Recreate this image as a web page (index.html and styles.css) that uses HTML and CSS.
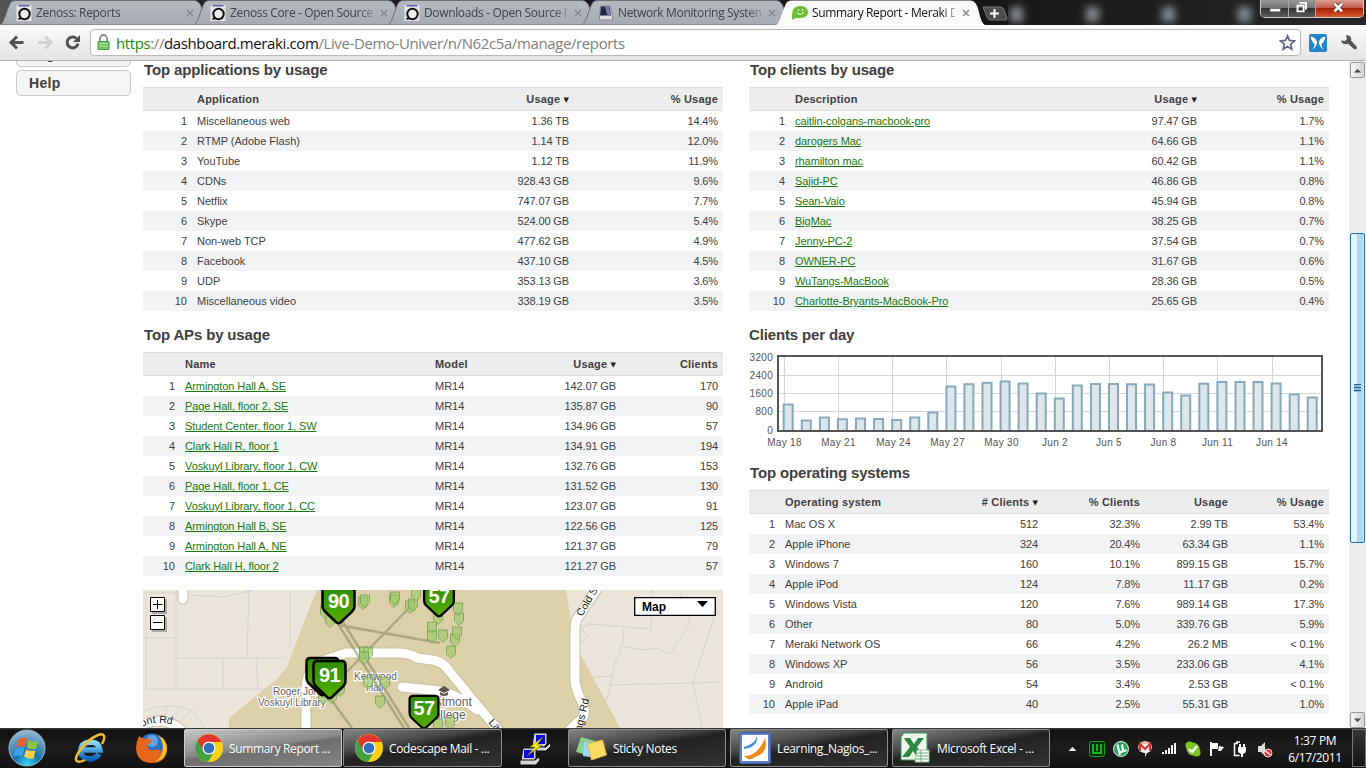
FILE: index.html
```html
<!DOCTYPE html>
<html lang="en">
<head>
<meta charset="utf-8">
<title>Summary Report - Meraki Dashboard</title>
<link rel="stylesheet" href="styles.css">
</head>
<body>
<svg class="defs" width="0" height="0" aria-hidden="true">
  <defs>
    <linearGradient id="tabFill" x1="0" y1="0" x2="0" y2="1"><stop offset="0" stop-color="#b5bac1"/><stop offset="1" stop-color="#a5aab3"/></linearGradient>
    <linearGradient id="pinFill" x1="0" y1="0" x2="0" y2="1"><stop offset="0" stop-color="#2f8c00"/><stop offset="1" stop-color="#55b000"/></linearGradient>
    <radialGradient id="orb" cx=".5" cy=".95" r=".9"><stop offset="0" stop-color="#35d5fa"/><stop offset=".4" stop-color="#1673ad"/><stop offset="1" stop-color="#8fb3cc"/></radialGradient>
    <linearGradient id="ieFill" x1="0" y1="0" x2="0" y2="1"><stop offset="0" stop-color="#8bdcfb"/><stop offset="1" stop-color="#0a62bd"/></linearGradient>
    <symbol id="zenoss" viewBox="0 0 15 16"><path fill="#e4e4e4" d="M0 0h15v16H0z"/><path fill="#5a62b8" d="M2 0h11v1.500H2z"/><circle cx="8" cy="9" r="5.200" fill="#eee" stroke="#111" stroke-width="2"/><path d="M2 14l3-1" stroke="#111" stroke-width="2"/></symbol>
    <symbol id="chrome" viewBox="0 0 28 28"><circle cx="14" cy="14" r="14" fill="#fdd017"/><path fill="#43a047" d="M14 14L1.900 7A14 14 0 0 0 13 28l6.500-11z"/><path fill="#e2352b" d="M2.500 6.200A14 14 0 0 1 26.500 8H14l-6 8z"/><circle cx="14" cy="14" r="6.600" fill="#f4f4f4"/><circle cx="14" cy="14" r="5.300" fill="#2c70be"/></symbol>
    <symbol id="close" viewBox="0 0 8 8"><path d="M1 1l6 6M7 1L1 7" stroke="#85898f" stroke-width="1.500"/></symbol>
    <symbol id="tabShape" viewBox="0 0 210 25"><path d="M0 25C5 23 8 3 12 1.500Q13 .5 16 .5H194Q198 .5 200 4C204 11 204 23 209 25z"/></symbol>
  </defs>
</svg>

<header class="tabstrip">
  <div class="tab"><svg class="tab-bg"><use href="#tabShape"/></svg><svg class="fav"><use href="#zenoss"/></svg><span class="tab-title">Zenoss: Reports</span><svg class="tab-x"><use href="#close"/></svg></div>
  <div class="tab"><svg class="tab-bg"><use href="#tabShape"/></svg><svg class="fav"><use href="#zenoss"/></svg><span class="tab-title">Zenoss Core - Open Source</span><svg class="tab-x"><use href="#close"/></svg></div>
  <div class="tab"><svg class="tab-bg"><use href="#tabShape"/></svg><svg class="fav"><use href="#zenoss"/></svg><span class="tab-title">Downloads - Open Source I</span><svg class="tab-x"><use href="#close"/></svg></div>
  <div class="tab"><svg class="tab-bg"><use href="#tabShape"/></svg><svg class="fav" viewBox="0 0 16 16"><path fill="#ddd" stroke="#888" d="M2.500 1h9.500l2.500 10v4h-13v-4z"/><path fill="#202448" d="M3 1.500h8.500l1.500 9H2z"/><path fill="#777dac" d="M7 1.500h4l1.500 9H9.500z"/></svg><span class="tab-title">Network Monitoring System</span><svg class="tab-x"><use href="#close"/></svg></div>
  <div class="tab active"><svg class="tab-bg"><use href="#tabShape"/></svg><svg class="fav" viewBox="0 0 16 16"><path fill="#6cbd34" d="M0 15C0 9-.5 1 8.500 1 13 1 16 3.500 16 7.300S12.500 13 8 13c-3 0-5 0-8 2z"/><path d="M5 8q4 3 7-1" stroke="#fff" fill="none"/><path fill="#fff" d="M6 4h1v2H6zM10 4h1v2h-1z"/></svg><span class="tab-title">Summary Report - Meraki D</span><svg class="tab-x"><use href="#close"/></svg></div>
  <svg class="newtab" viewBox="0 0 26 15"><path fill="#4c4c4c" stroke="#777" d="M1 1h18q2 0 3 3l3 8q.500 2-1 2H8q-2 0-3-3z"/><path stroke="#fff" stroke-width="2" d="M8 7.500h9M12.500 3v9"/></svg>
  <div class="glass"><i></i><i></i><i></i><i></i></div>
  <div class="winbtns">
    <span class="wb min"><svg viewBox="0 0 28 18"><path fill="#fff" stroke="#555" stroke-width=".6" d="M9.500 9h11v3.500h-11z"/></svg></span>
    <span class="wb max"><svg viewBox="0 0 27 18"><path fill="none" stroke="#fff" stroke-width="2" d="M11 3h7v7M9 6h6.500v6H9z"/></svg></span>
    <span class="wb cls"><svg viewBox="0 0 47 18"><path stroke="#533" stroke-width="4.500" d="M19.500 4l8 8M27.500 4l-8 8"/><path stroke="#fff" stroke-width="2.800" d="M19.500 4l8 8M27.500 4l-8 8"/></svg></span>
  </div>
</header>

<nav class="toolbar">
  <svg class="nav-ic" viewBox="0 0 90 35"><g fill="none" stroke-width="3"><path stroke="#505050" d="M23.500 17.500H11M17 11.500l-6 6 6 6"/><path stroke="#d2d2d2" d="M38 17.500h12M45 11.500l6 6-6 6"/><path stroke="#505050" d="M76.500 13.500A5.500 5.500 0 1 0 78 18.500"/></g><path fill="#505050" d="M80 10v7h-7z"/></svg>
  <div class="omnibox">
    <svg class="lock" viewBox="0 0 13 17"><path d="M3 8V4.500a3.500 3.500 0 0 1 7 0V8" fill="none" stroke="#8a8a8a" stroke-width="1.800"/><path fill="#74c567" stroke="#4b9b43" d="M1 7.500h11v8H1z"/><path stroke="#a7dfa0" d="M2 9.500h9M2 12h9"/></svg>
    <span class="url"><b class="ok">https</b>://<b>dashboard.meraki.com</b>/Live-Demo-Univer/n/N62c5a/manage/reports</span>
    <svg class="star" viewBox="0 0 17 17"><path fill="#fff" stroke="#5f6880" stroke-width="1.700" d="M8.500 1.800l2 4.600 5 .5-3.800 3.300 1.100 5-4.300-2.700-4.300 2.700 1.100-5L1.500 6.900l5-.5z"/></svg>
  </div>
  <svg class="ext" viewBox="0 0 18 18"><rect width="18" height="18" rx="2" fill="#2284ca"/><path fill="#fff" d="M1.500 2.500c4 .5 6 2.500 6.700 6-.2 2.500-1.700 4.500-4.700 7.500 1.500-2.500 2-4.500 2-6-2-1.500-3.200-4-4-7.500zM16.500 2.500c-4 .5-6 2.500-6.700 6 .2 2.500 1.700 4.500 4.700 7.500-1.500-2.500-2-4.500-2-6 2-1.500 3.200-4 4-7.500z"/></svg>
  <svg class="wrench" viewBox="0 0 18 18"><path fill="#555" d="M1 6.500L5 7l2-2-1-3.500c3-.8 6 1.500 5 5l5.500 6c1.500 2-.8 4-2.500 2.600L8 9.800C5 11 1.500 9.500 1 6.500z"/></svg>
</nav>

<main class="viewport">
  <aside class="side"><a class="side-btn">Organization</a><a class="side-btn">Help</a></aside>

  <section class="col">
    <h2>Top applications by usage</h2>
    <table>
      <colgroup><col style="width:49px"><col style="width:233px"><col style="width:149px"><col style="width:149px"></colgroup>
      <thead><tr><th></th><th>Application</th><th class="r">Usage <i class="sort">▼</i></th><th class="r">% Usage</th></tr></thead>
      <tbody>
      <tr><td>1</td><td>Miscellaneous web</td><td class="r">1.36 TB</td><td class="r">14.4%</td></tr>
      <tr><td>2</td><td>RTMP (Adobe Flash)</td><td class="r">1.14 TB</td><td class="r">12.0%</td></tr>
      <tr><td>3</td><td>YouTube</td><td class="r">1.12 TB</td><td class="r">11.9%</td></tr>
      <tr><td>4</td><td>CDNs</td><td class="r">928.43 GB</td><td class="r">9.6%</td></tr>
      <tr><td>5</td><td>Netflix</td><td class="r">747.07 GB</td><td class="r">7.7%</td></tr>
      <tr><td>6</td><td>Skype</td><td class="r">524.00 GB</td><td class="r">5.4%</td></tr>
      <tr><td>7</td><td>Non-web TCP</td><td class="r">477.62 GB</td><td class="r">4.9%</td></tr>
      <tr><td>8</td><td>Facebook</td><td class="r">437.10 GB</td><td class="r">4.5%</td></tr>
      <tr><td>9</td><td>UDP</td><td class="r">353.13 GB</td><td class="r">3.6%</td></tr>
      <tr><td>10</td><td>Miscellaneous video</td><td class="r">338.19 GB</td><td class="r">3.5%</td></tr>
      </tbody>
    </table>
    <h2>Top APs by usage</h2>
    <table>
      <colgroup><col style="width:37px"><col style="width:250px"><col style="width:80px"><col style="width:111px"><col style="width:102px"></colgroup>
      <thead><tr><th></th><th>Name</th><th>Model</th><th class="r">Usage <i class="sort">▼</i></th><th class="r">Clients</th></tr></thead>
      <tbody>
      <tr><td>1</td><td><a>Armington Hall A, SE</a></td><td>MR14</td><td class="r">142.07 GB</td><td class="r">170</td></tr>
      <tr><td>2</td><td><a>Page Hall, floor 2, SE</a></td><td>MR14</td><td class="r">135.87 GB</td><td class="r">90</td></tr>
      <tr><td>3</td><td><a>Student Center, floor 1, SW</a></td><td>MR14</td><td class="r">134.96 GB</td><td class="r">57</td></tr>
      <tr><td>4</td><td><a>Clark Hall R, floor 1</a></td><td>MR14</td><td class="r">134.91 GB</td><td class="r">194</td></tr>
      <tr><td>5</td><td><a>Voskuyl Library, floor 1, CW</a></td><td>MR14</td><td class="r">132.76 GB</td><td class="r">153</td></tr>
      <tr><td>6</td><td><a>Page Hall, floor 1, CE</a></td><td>MR14</td><td class="r">131.52 GB</td><td class="r">130</td></tr>
      <tr><td>7</td><td><a>Voskuyl Library, floor 1, CC</a></td><td>MR14</td><td class="r">123.07 GB</td><td class="r">91</td></tr>
      <tr><td>8</td><td><a>Armington Hall B, SE</a></td><td>MR14</td><td class="r">122.56 GB</td><td class="r">125</td></tr>
      <tr><td>9</td><td><a>Armington Hall A, NE</a></td><td>MR14</td><td class="r">121.37 GB</td><td class="r">79</td></tr>
      <tr><td>10</td><td><a>Clark Hall H, floor 2</a></td><td>MR14</td><td class="r">121.27 GB</td><td class="r">57</td></tr>
      </tbody>
    </table>
    <svg class="map" viewBox="143 590 580 138">
      <defs>
        <path id="ap" d="M-4.500-6h9V2L0 6.500-4.500 2z"/>
        <path id="pin" d="M-12-38h24q4 0 4 4v16q0 3-2 5L2-1.500Q0 0-2-1.500L-14-13q-2-2-2-5v-16q0-4 4-4z"/>
        <path id="cold" d="M582 617L606 577"/>
        <path id="mont" d="M142 727Q160 717 190 731"/>
      </defs>
      <path fill="#ece5dc" d="M143 590h580v138H143z"/>
      <g fill="none" stroke="#d6d2cf"><path d="M146 590v98M143 593h33M143 638h33M176 590v98M146 689h118l15-2M177 658h107M223 658v31M256 658l2 31M249 590l-2 67M290 590v58M187 595l37 2 30-7M143 711q25-10 50 0l12 17M168 706l-5 12M180 708l-10 12M191 710l-13 14"/>
      <path d="M582 627l8-3 61 5 2-39M590 624l-9 3 6 9-8 10M651 590l-1 3M624 627l-1 15-8 22-6 28-7 20M620 646l25 4 10-2 15 6 20-31-10-30M723 610l-9 7-21 66 30-1M693 683l-85 2M593 677l20-1M693 683l9 45"/></g>
      <path fill="#dcd0a9" d="M317 590l-11 27-19 50-10 12-48 39v10h391l-40-75-7-20-7-43z"/>
      <g fill="none" stroke-linejoin="round" stroke-linecap="round">
        <g stroke="#cbbf9d" stroke-width="11"><path d="M306 735v-45Q306 670 322 661L346 653H398Q410 653 417 658L432 660Q443 661 450 672L477 705 500 732M402 687L432 690Q455 692 477 710"/><path d="M603 580L579 616Q575 620 575 630V682Q576 690 582 702 588 716 578 722L568 732M183 585v14M138 726Q168 713 186 735"/></g>
        <g stroke="#fff" stroke-width="9"><path d="M306 735v-45Q306 670 322 661L346 653H398Q410 653 417 658L432 660Q443 661 450 672L477 705 500 732M402 687L432 690Q455 692 477 710"/><path d="M603 580L579 616Q575 620 575 630V682Q576 690 582 702 588 716 578 722L568 732M183 585v14M138 726Q168 713 186 735"/></g>
      </g>
      <g class="place">
        <text x="354" y="680">Kerrwood</text><text x="366" y="691">Hall</text>
        <text x="273" y="695">Roger Jones</text><text x="258" y="706">Voskuyl Library</text>
        <g class="big"><text x="418" y="706">Westmont</text><text x="425" y="719">College</text></g>
      </g>
      <g class="road"><text><textPath href="#cold">Cold S</textPath></text><text transform="translate(581 734) rotate(-77)">ings Rd</text><text><textPath href="#mont">ont Rd</textPath></text><text transform="translate(488 723) rotate(45)">La</text></g>
      <path fill="#58534d" d="M438 690l6-4 6 4-6 3zM440 692v3q4 2 8 0v-3l-4 2zM449 690v4"/>
      <g stroke="#7e8058" stroke-opacity=".5" stroke-width="2.500"><path d="M338 624l66 104M343 622l66 106M338 625l102 18M413 604l-82 84M330 698l22 30"/></g>
      <g fill="#9ccb68" fill-opacity=".65" stroke="#71965a" stroke-opacity=".7">
        <use href="#ap" x="330" y="621"/><use href="#ap" x="325" y="612"/><use href="#ap" x="363" y="603"/><use href="#ap" x="365" y="601"/><use href="#ap" x="394" y="601"/><use href="#ap" x="395" y="598"/><use href="#ap" x="410" y="607"/><use href="#ap" x="413" y="605"/><use href="#ap" x="416" y="595"/><use href="#ap" x="432" y="628"/><use href="#ap" x="432" y="637"/><use href="#ap" x="438" y="618"/><use href="#ap" x="443" y="636"/><use href="#ap" x="455" y="640"/><use href="#ap" x="457" y="633"/><use href="#ap" x="451" y="652"/><use href="#ap" x="459" y="619"/><use href="#ap" x="458" y="609"/><use href="#ap" x="364" y="653"/><use href="#ap" x="368" y="653"/><use href="#ap" x="364" y="658"/><use href="#ap" x="368" y="683"/><use href="#ap" x="385" y="683"/><use href="#ap" x="380" y="702"/><use href="#ap" x="340" y="690"/><use href="#ap" x="332" y="697"/><use href="#ap" x="323" y="698"/><use href="#ap" x="438" y="725"/><use href="#ap" x="450" y="723"/>
      </g>
      <g fill="url(#pinFill)" stroke="#000" stroke-width="2.500">
        <use href="#pin" transform="translate(338.500 624)"/><use href="#pin" transform="translate(439 617) scale(.93 .9)"/>
        <use href="#pin" transform="translate(322.500 696)"/><use href="#pin" transform="translate(329.500 699)"/><use href="#pin" transform="translate(424 729) scale(.9 .87)"/>
      </g>
      <g class="pin-n"><text x="338.500" y="608">90</text><text x="439" y="603">57</text><text x="329.500" y="682">91</text><text x="424" y="715">57</text></g>
      <g stroke="#000" fill="#fff"><path fill="#aaa" stroke="none" d="M152 599h15v15h-15zM152 617h15v15h-15z"/><path d="M150.500 597.500h14v14h-14zM150.500 615.500h14v14h-14zM153 604.500h9.500M157.500 600v9M153 622.500h9.500"/></g>
      <path fill="#fff" stroke="#000" stroke-width="1.300" d="M634.700 597.700h80.600v17.600h-80.600z"/><path d="M697 601h11l-5.500 6z"/><text class="map-type" x="642" y="611">Map</text>
    </svg>
  </section>

  <section class="col">
    <h2>Top clients by usage</h2>
    <table>
      <colgroup><col style="width:41px"><col style="width:285px"><col style="width:127px"><col style="width:127px"></colgroup>
      <thead><tr><th></th><th>Description</th><th class="r">Usage <i class="sort">▼</i></th><th class="r">% Usage</th></tr></thead>
      <tbody>
      <tr><td>1</td><td><a>caitlin-colgans-macbook-pro</a></td><td class="r">97.47 GB</td><td class="r">1.7%</td></tr>
      <tr><td>2</td><td><a>darogers Mac</a></td><td class="r">64.66 GB</td><td class="r">1.1%</td></tr>
      <tr><td>3</td><td><a>rhamilton mac</a></td><td class="r">60.42 GB</td><td class="r">1.1%</td></tr>
      <tr><td>4</td><td><a>Sajid-PC</a></td><td class="r">46.86 GB</td><td class="r">0.8%</td></tr>
      <tr><td>5</td><td><a>Sean-Vaio</a></td><td class="r">45.94 GB</td><td class="r">0.8%</td></tr>
      <tr><td>6</td><td><a>BigMac</a></td><td class="r">38.25 GB</td><td class="r">0.7%</td></tr>
      <tr><td>7</td><td><a>Jenny-PC-2</a></td><td class="r">37.54 GB</td><td class="r">0.7%</td></tr>
      <tr><td>8</td><td><a>OWNER-PC</a></td><td class="r">31.67 GB</td><td class="r">0.6%</td></tr>
      <tr><td>9</td><td><a>WuTangs-MacBook</a></td><td class="r">28.36 GB</td><td class="r">0.5%</td></tr>
      <tr><td>10</td><td><a>Charlotte-Bryants-MacBook-Pro</a></td><td class="r">25.65 GB</td><td class="r">0.4%</td></tr>
      </tbody>
    </table>
    <h2 class="flush">Clients per day</h2>
    <svg class="chart" viewBox="749 352 580 97">
      <path fill="none" stroke="#d5d5d5" d="M778 375.500h544M778 393.500h544M778 411.500h544M784.500 356v75M838.500 356v75M892.500 356v75M946.500 356v75M1001.500 356v75M1055.500 356v75M1109.500 356v75M1163.500 356v75M1217.500 356v75M1272.500 356v75"/>
      <g fill="#dde6ea" stroke="#86a8ba" stroke-width="2">
        <path d="M783.700 431V404.500h9V431M801.800 431V420.500h9V431M819.900 431V417.500h9V431M837.900 431V419.300h9V431M856 431V418.400h9V431M874.100 431V419h9V431M892.200 431V420h9V431M910.200 431V417.500h9V431M928.300 431V412.500h9V431M946.400 431V386.500h9V431"/>
        <path d="M964.400 431V384.200h9V431M982.500 431V382.700h9V431M1000.600 431V381.600h9V431M1018.600 431V383.400h9V431M1036.700 431V393.500h9V431M1054.800 431V398.500h9V431M1072.800 431V385.500h9V431M1090.900 431V384h9V431M1109 431V384h9V431M1127 431V384.200h9V431"/>
        <path d="M1145.100 431V384.500h9V431M1163.200 431V392.600h9V431M1181.200 431V395.500h9V431M1199.300 431V383.800h9V431M1217.400 431V382h9V431M1235.500 431V382h9V431M1253.500 431V382h9V431M1271.600 431V383.500h9V431M1289.700 431V394.500h9V431M1307.700 431V397.500h9V431"/>
      </g>
      <path fill="none" stroke="#545454" stroke-width="2" d="M778 356h544v75H778z"/>
      <g class="yl"><text x="773" y="361">3200</text><text x="773" y="379">2400</text><text x="773" y="397">1600</text><text x="773" y="415">800</text><text x="773" y="434">0</text></g>
      <g class="xl"><text x="784.500" y="446">May 18</text><text x="838.500" y="446">May 21</text><text x="893.500" y="446">May 24</text><text x="947.500" y="446">May 27</text><text x="1001.500" y="446">May 30</text><text x="1055" y="446">Jun 2</text><text x="1109" y="446">Jun 5</text><text x="1163.500" y="446">Jun 8</text><text x="1217.500" y="446">Jun 11</text><text x="1272" y="446">Jun 14</text></g>
    </svg>
    <h2>Top operating systems</h2>
    <table>
      <colgroup><col style="width:31px"><col style="width:143px"><col style="width:120px"><col style="width:102px"><col style="width:88px"><col style="width:96px"></colgroup>
      <thead><tr><th></th><th>Operating system</th><th class="r"># Clients <i class="sort">▼</i></th><th class="r">% Clients</th><th class="r">Usage</th><th class="r">% Usage</th></tr></thead>
      <tbody>
      <tr><td>1</td><td>Mac OS X</td><td class="r">512</td><td class="r">32.3%</td><td class="r">2.99 TB</td><td class="r">53.4%</td></tr>
      <tr><td>2</td><td>Apple iPhone</td><td class="r">324</td><td class="r">20.4%</td><td class="r">63.34 GB</td><td class="r">1.1%</td></tr>
      <tr><td>3</td><td>Windows 7</td><td class="r">160</td><td class="r">10.1%</td><td class="r">899.15 GB</td><td class="r">15.7%</td></tr>
      <tr><td>4</td><td>Apple iPod</td><td class="r">124</td><td class="r">7.8%</td><td class="r">11.17 GB</td><td class="r">0.2%</td></tr>
      <tr><td>5</td><td>Windows Vista</td><td class="r">120</td><td class="r">7.6%</td><td class="r">989.14 GB</td><td class="r">17.3%</td></tr>
      <tr><td>6</td><td>Other</td><td class="r">80</td><td class="r">5.0%</td><td class="r">339.76 GB</td><td class="r">5.9%</td></tr>
      <tr><td>7</td><td>Meraki Network OS</td><td class="r">66</td><td class="r">4.2%</td><td class="r">26.2 MB</td><td class="r">&lt; 0.1%</td></tr>
      <tr><td>8</td><td>Windows XP</td><td class="r">56</td><td class="r">3.5%</td><td class="r">233.06 GB</td><td class="r">4.1%</td></tr>
      <tr><td>9</td><td>Android</td><td class="r">54</td><td class="r">3.4%</td><td class="r">2.53 GB</td><td class="r">&lt; 0.1%</td></tr>
      <tr><td>10</td><td>Apple iPad</td><td class="r">40</td><td class="r">2.5%</td><td class="r">55.31 GB</td><td class="r">1.0%</td></tr>
      </tbody>
    </table>
  </section>

  <div class="scroll">
    <span class="sb-btn"><svg viewBox="0 0 9 5"><path fill="#444" d="M1 4.500h7L4.500 1z"/></svg></span>
    <span class="sb-thumb"><i></i></span>
    <span class="sb-btn"><svg viewBox="0 0 9 5"><path fill="#444" d="M1 .5h7L4.500 4z"/></svg></span>
  </div>
</main>

<footer class="taskbar">
  <svg class="launch" viewBox="0 728 184 40">
    <circle cx="27" cy="748" r="18" fill="url(#orb)" stroke="#9fb6c4"/>
    <path fill="#e8622c" d="M18 740q5-4 9-1l-2 8q-4-2-9 0z"/><path fill="#8cc63f" d="M28 740q4 3 10 1l-2 8q-5 1-9-1z"/><path fill="#3f9fe8" d="M15.500 749q5-3 9-.5l-2 8q-4-2-9 .5z"/><path fill="#fdd04a" d="M26 749.500q4 2 9.500 1l-2 8q-5 1-9.500-2z"/>
    <path fill="none" stroke="url(#ieFill)" stroke-width="5.500" d="M80 750h20q-1-8-10-8-9 1-9.500 9 1 8 9.500 8 6-.5 9-5"/>
    <path fill="none" stroke="#f2bd2e" stroke-width="2.500" d="M102 744c5-9 1-12-6-8-9 4-19 17-20 22-1 5 5 4 9 2"/>
    <circle cx="152" cy="747" r="13.500" fill="#2a6fc4"/><circle cx="152" cy="741" r="6" fill="#8ec7f2" fill-opacity=".6"/>
    <path fill="#e8671b" d="M139 736q3 3 7 3 6-1 6 3l-5 3q1 6 7 5 5-1 7 1-3 6-9 5 10 0 11-10l-1-9q6 6 5 14-2 12-15 12-15 0-16-15 0-6 3-12z"/><path fill="#ffc62b" d="M158 735q9 5 9 14-2 11-12 13 8-5 8-14 0-7-5-13z"/>
  </svg>
  <div class="task on"><svg class="t28"><use href="#chrome"/></svg><span>Summary Report ...</span></div>
  <div class="task second"><svg class="t28"><use href="#chrome"/></svg><span>Codescape Mail - ...</span></div>
  <svg class="putty" viewBox="0 0 66 40"><g stroke="#111" fill="#d5d5d5"><path d="M32 5h13v11l-3 3H30z"/><path d="M29 19h15l4-4 1 3-5 5H29z"/><path d="M21 20h13v10l-3 3H19z"/><path d="M18 32h15l4-3 1 3-4 5H18z"/></g><path fill="#0909e5" d="M34 7h9v9h-9zM22 22h10v8H22z"/><path fill="#fff500" stroke="#766800" stroke-width=".5" d="M41 9L28 19h5l-8 9 15-11h-5z"/></svg>
  <div class="task sticky"><svg class="t32" viewBox="0 0 32 28"><path fill="#8bd18c" d="M6 3l14 4-5 15L1 18z"/><path fill="#9cd8f5" d="M9 8l13 1v15L8 22z"/><path fill="#fbdc66" stroke="#e2b844" d="M12.500 10l15-4 4 15-15 5z"/></svg><span>Sticky Notes</span></div>
  <div class="task pdf"><svg class="t32" viewBox="0 0 32 32"><rect x=".5" y=".5" width="31" height="31" rx="2" fill="#5d80c2" stroke="#3f5f9f"/><path fill="#fff" d="M3 3h26v26H3z"/><path fill="#3a8bd8" d="M5 15q11-3 13-11 1 11-13 13z"/><path fill="#f08519" d="M5 24q14 0 21-18 4 15-10 19-4 3-7 2z"/></svg><span>Learning_Nagios_...</span></div>
  <div class="task xl-task"><svg class="t32" viewBox="0 0 32 32"><path fill="#eef6ee" stroke="#2f9b4c" d="M5 1h23v27H2V5z"/><path fill="#278a3f" d="M5 6h6l4 6 4-6h6l-7 9 7 10h-7l-4-6-4 6H3l8-10z"/><path fill="#fff" stroke="#8abf93" d="M18 18h12v12H16z"/><path stroke="#69aa76" d="M18 21h11M18 24h11M17 27h12M22 18v12"/></svg><span>Microsoft Excel - ...</span></div>
  <svg class="tray" viewBox="1060 728 220 40">
    <path fill="#eee" d="M1068.500 751h8l-4-4z"/>
    <rect x="1089.500" y="741.500" width="15" height="15" rx="2" fill="#062c06" stroke="#14a514"/><path fill="none" stroke="#19b319" stroke-width="2" d="M1093 744v9h8v-9M1097 744v7"/>
    <circle cx="1121" cy="749" r="8" fill="#28a05a"/><circle cx="1121" cy="749" r="7.400" fill="none" stroke="#d9efdf"/><path fill="none" stroke="#fff" stroke-width="2.200" d="M1117.500 744.500l1.500 7q3 1.500 4-1l-1-6 1.200 6q1.300 1 3-.5M1119 751l.7 4"/>
    <ellipse cx="1145" cy="747" rx="7" ry="6" fill="#e9b0b0"/><path fill="#f1f1f1" d="M1139 744h12v7l-4 2-2 4v-4l-6-2z"/><path fill="none" stroke="#d93434" stroke-width="2" d="M1140 751v-7l5 5 5-5v7"/>
    <path fill="#fff" d="M1162 752h2v2h-2zM1165 750h2v4h-2zM1168 748h2v6h-2zM1171 745h2v9h-2zM1174 743h2v11h-2z"/>
    <circle cx="1193" cy="749" r="6.500" fill="#7cc525"/><circle cx="1189.500" cy="745.500" r="4" fill="#7cc525"/><circle cx="1196.500" cy="752.500" r="4" fill="#7cc525"/><path fill="none" stroke="#fff" stroke-width="2.200" d="M1189 749l3 3 5-6"/>
    <path fill="#fff" d="M1210 742h2v14h-2zM1212 743h6v6h-6zM1219 746l5 1-3 4h-3z"/>
    <path fill="none" stroke="#fff" stroke-width="1.500" d="M1238 743.500h-3.500v12h5M1236 742h4"/><path fill="#fff" d="M1239 744h2v3h2v-3h2v3h1v4q0 2-3 3v3h-2v-3q-3-1-3-3v-4h1z"/>
    <path fill="#ddd" d="M1258 746h3l4-4v14l-4-4h-3z"/><circle cx="1268" cy="753" r="4" fill="#e83131" stroke="#fff" stroke-width=".8"/><path stroke="#fff" stroke-width="1.500" d="M1265.500 751l5 4"/>
  </svg>
  <div class="clock"><span>1:37 PM</span><span>6/17/2011</span></div>
  <div class="peek"></div>
</footer>
</body>
</html>
```
FILE: styles.css
```css
* { box-sizing: border-box; }
html, body { margin: 0; height: 768px; overflow: hidden; }
body { display: flex; flex-direction: column; width: 1366px; background: #fff; color: #404040; font: 11px "Liberation Sans", Arial, sans-serif; }
svg { display: block; flex: none; }
.defs { position: absolute; }

/* Browser tabs */
.tabstrip { display: flex; flex: none; height: 25px; background: linear-gradient(90deg, #555 0, #222 15%, #151515 70%, #262626); font: 12px "Open Sans", "Noto Sans", sans-serif; letter-spacing: -.35px; }
.tab { position: relative; display: flex; align-items: center; flex: none; width: 194px; padding: 1px 0 0 16px; color: #3f4246; }
.tab-bg { position: absolute; left: 0; top: 0; width: 210px; height: 25px; fill: url(#tabFill); stroke: #6a6d72; }
.active { color: #111; z-index: 1; }
.active .tab-bg { fill: #fafafa; stroke: none; }
.fav { position: relative; width: 16px; height: 16px; }
.tab-title { position: relative; width: 147px; margin: 0 7px 0 4px; overflow: hidden; white-space: nowrap; line-height: 18px; -webkit-mask-image: linear-gradient(90deg, #000 130px, transparent 149px); mask-image: linear-gradient(90deg, #000 130px, transparent 149px); }
.tab-x { position: relative; width: 8px; height: 8px; }
.newtab { width: 26px; height: 15px; margin: 6px 0 0 12px; }
.glass { display: flex; flex: 1; gap: 63px; padding: 7px 0 0 2px; overflow: hidden; }
.glass i { width: 13px; height: 15px; flex: none; background: #8b9196; filter: blur(4px); }
.winbtns { display: flex; flex: none; width: 104px; height: 18px; margin-right: 2px; border: 1px solid #ccc; border-top: 0; border-radius: 0 0 5px 5px; overflow: hidden; }
.wb { background: linear-gradient(#999 0, #727272 48%, #333 50%, #5c5c5c); border-right: 1px solid #aaa; }
.wb svg { height: 17px; }
.min { width: 28px; }
.max { width: 27px; }
.cls { flex: 1; border: 0; background: linear-gradient(#d9a094 0, #c45d49 45%, #a92208 50%, #d95a2d); }

/* Toolbar */
.toolbar { display: flex; align-items: center; flex: none; height: 36px; background: linear-gradient(#fbfbfb, #e4e4e4); border-bottom: 1px solid #aeb0bc; }
.nav-ic { width: 90px; height: 35px; }
.omnibox { display: flex; align-items: center; width: 1211px; height: 27px; margin-right: 8px; padding: 0 4px 0 6px; background: #fff; border: 1px solid #b9b9b9; border-radius: 4px; }
.lock { width: 13px; height: 17px; }
.url { flex: 1; margin-left: 6px; color: #808080; font: 15px/22px "Open Sans", "Noto Sans", sans-serif; letter-spacing: -.39px; white-space: nowrap; }
.url b { font-weight: 400; color: #111; }
.url .ok { color: #0d930d; }
.star { width: 17px; height: 17px; }
.ext { width: 18px; height: 18px; }
.wrench { width: 18px; height: 18px; margin-left: 13px; }

/* Page */
.viewport { display: flex; flex: none; height: 667px; overflow: hidden; background: #fff; }
.side { width: 143px; padding-left: 16px; margin-top: -20px; flex: none; }
.side-btn { display: block; width: 115px; height: 26px; margin-bottom: 3px; padding-left: 12px; border: 1px solid #c9c9c9; border-radius: 5px; background: #f5f5f5; font: bold 14px/24px "Liberation Sans", Arial, sans-serif; letter-spacing: .3px; }
.col { width: 580px; margin-right: 26px; flex: none; }
h2 { margin: 0; padding: 15px 0 8px 1px; font: bold 15px/18px "Liberation Sans", Arial, sans-serif; letter-spacing: -.15px; color: #404040; white-space: nowrap; }
h2:first-child { padding-top: 0; }
h2.flush { padding-left: 0; }
table { width: 580px; border-collapse: separate; border-spacing: 0; table-layout: fixed; }
th, td { padding: 0 5px; text-align: left; white-space: nowrap; height: 20px; line-height: 20px; }
th { height: 24px; line-height: 22px; background: #ededed; border: solid #dcdcdc; border-width: 1px 0; letter-spacing: .2px; }
td:first-child, .r { text-align: right; }
td.r { letter-spacing: -.12px; }
tbody tr:nth-child(even) { background: #f2f3f5; }
td a { color: #187a0c; text-decoration: underline; letter-spacing: -.09px; }
.sort { font: 7px/8px "DejaVu Sans", sans-serif; vertical-align: 1px; letter-spacing: 0; color: #222; }
.chart { width: 580px; height: 97px; font-size: 10px; letter-spacing: .3px; fill: #545454; }
.yl { text-anchor: end; }
.xl { text-anchor: middle; }
.map { width: 580px; height: 138px; margin-top: 14px; }
.place text { fill: #65625d; stroke: #fff; stroke-width: 2.500px; paint-order: stroke; font-size: 10px; }
.place .big text { font-size: 12px; }
.road text { font-size: 10.500px; fill: #222; }
.pin-n { font: bold 20px "Liberation Sans", Arial, sans-serif; fill: #fff; text-anchor: middle; letter-spacing: -.5px; }
.map-type { font: bold 12px "Liberation Sans", Arial, sans-serif; }

/* Scrollbar */
.scroll { display: flex; flex-direction: column; width: 17px; margin-left: -6px; padding: 1px 1px 0; background: #ededed; }
.sb-btn { display: flex; align-items: center; justify-content: center; height: 16px; background: linear-gradient(90deg, #f5f5f5, #d4d4d4); border: 1px solid #9a9a9a; border-radius: 2px; }
.sb-btn:last-child { margin-top: auto; }
.sb-btn svg { width: 9px; height: 5px; }
.sb-thumb { display: flex; align-items: center; justify-content: center; height: 310px; margin-top: 155px; border: 1px solid #2b729f; border-radius: 2px; background: linear-gradient(90deg, #e2f3fc 0 45%, #a9daf4 50% 85%, #c9ebfb); }
.sb-thumb i { width: 7px; height: 8px; background: repeating-linear-gradient(#315f7c 0 1px, #8dc4df 1px 3px); }

/* Taskbar */
.taskbar { display: flex; flex: none; height: 40px; background: linear-gradient(#444 0, #111 2px, #1c1c1c 50%, #111); color: #fff; font: 12px "Open Sans", "Noto Sans", sans-serif; letter-spacing: -.35px; }
.launch { width: 184px; height: 40px; }
.task { display: flex; align-items: center; gap: 6px; width: 158px; height: 38px; margin: 1px 4px 0 0; padding-left: 10px; flex: none; border: 1px solid #8d8d8d; border-radius: 2px; background: linear-gradient(170deg, #858585 0, #444 36%, #222 48%, #343434); white-space: nowrap; }
.task.on { margin-right: 1px; border-color: #ccc; background: linear-gradient(172deg, #c4c4c4 0, #8a8a8a 46%, #6d6d6d 52%, #858585); }
.task.second { width: 159px; margin-right: 0; padding-left: 11px; }
.t28 { width: 28px; height: 28px; }
.t32 { width: 32px; height: 32px; }
.sticky .t32 { height: 28px; }
.task.sticky { padding-left: 6px; }
.task.pdf { padding-left: 8px; }
.task.xl-task { padding-left: 6px; margin-right: 10px; }
.putty { width: 66px; height: 40px; }
.tray { width: 220px; height: 40px; }
.clock { display: flex; flex-direction: column; width: 70px; padding-top: 4px; text-align: center; line-height: 17px; }
.peek { width: 14px; margin: 1px 0 1px auto; border: 1px solid #777; background: linear-gradient(#333, #151515); flex: none; }
```
